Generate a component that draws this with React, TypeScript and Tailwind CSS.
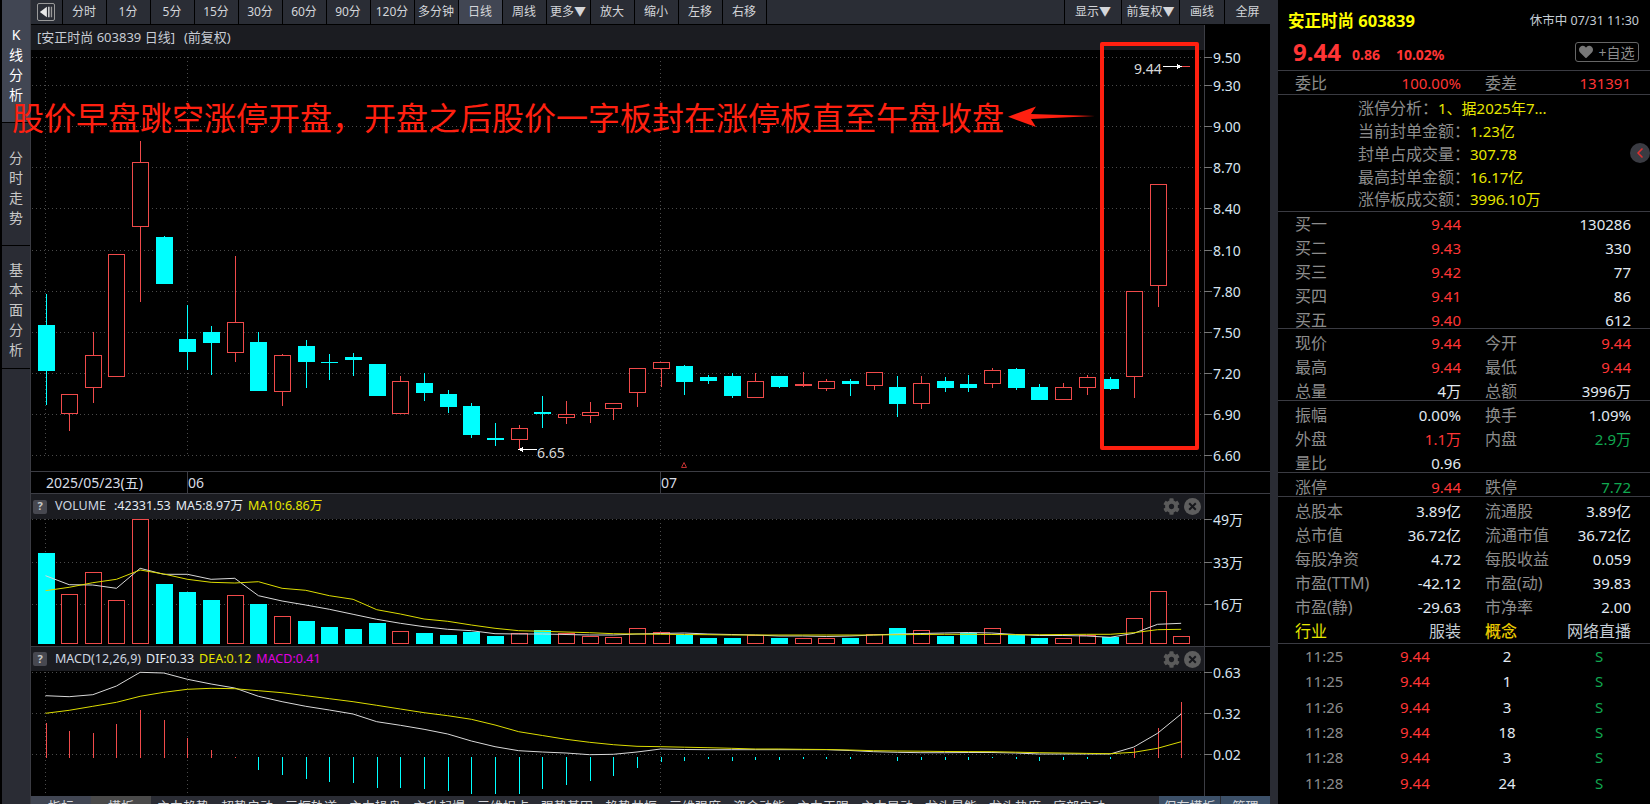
import React from 'react';
import { FaCog, FaHeart } from 'react-icons/fa';
import { ChevronLeft } from 'lucide-react';

const RED = '#f04a4a';
const CYAN = '#00ffff';
const WHITE_LINE = '#d8d8d8';
const YELLOW_LINE = '#dcdc00';

const xAt = (i: number) => Math.round(45.5 + 23.66 * i) + 0.5;

// wickTop, wickBottom, bodyTop, bodyBottom, up
type Candle = [number, number, number, number, boolean];
const candles: Candle[] = [
  [294, 405, 325, 371, false],
  [394, 431, 394, 413, true],
  [332, 403, 355, 387, true],
  [254, 376, 254, 376, true],
  [141, 302, 162, 226, true],
  [236, 284, 237, 284, false],
  [305, 370, 339, 352, false],
  [326, 375, 332, 343, false],
  [256, 362, 322, 352, true],
  [332, 391, 342, 391, false],
  [354, 406, 355, 391, true],
  [340, 388, 346, 362, false],
  [354, 380, 362, 363, false],
  [353, 376, 357, 360, false],
  [364, 396, 364, 396, false],
  [376, 413, 381, 413, true],
  [373, 401, 383, 393, false],
  [390, 413, 394, 407, false],
  [403, 438, 406, 435, false],
  [423, 446, 438, 440, false],
  [425, 450, 428, 439, true],
  [396, 428, 412, 414, false],
  [401, 424, 414, 417, true],
  [402, 423, 412, 415, true],
  [403, 420, 403, 408, true],
  [368, 407, 368, 392, true],
  [362, 387, 362, 368, true],
  [365, 395, 366, 382, false],
  [375, 384, 377, 381, false],
  [373, 398, 376, 396, false],
  [373, 398, 381, 397, true],
  [376, 388, 376, 387, false],
  [372, 387, 384, 385, true],
  [379, 391, 381, 388, true],
  [379, 396, 381, 384, false],
  [372, 390, 372, 385, true],
  [376, 417, 387, 404, false],
  [376, 409, 383, 403, true],
  [377, 392, 381, 388, false],
  [375, 392, 384, 388, false],
  [368, 388, 370, 383, true],
  [368, 390, 369, 388, false],
  [384, 400, 387, 400, false],
  [383, 399, 387, 399, true],
  [375, 395, 377, 387, true],
  [377, 390, 379, 389, false],
  [291, 398, 291, 376, true],
  [184, 307, 184, 285, true],
];

const volumes: [number, boolean][] = [
  [553, false], [594, true], [572, true], [600, true], [519, true], [584, false], [592, false], [600, false],
  [595, true], [604, false], [616, true], [621, false], [627, false], [629, false], [623, false], [631, true],
  [633, false], [635, false], [632, false], [636, false], [633, true], [630, false], [633, true], [636, true],
  [637, true], [628, true], [632, true], [635, false], [638, false], [638, false], [635, true], [638, false],
  [638, true], [638, true], [638, false], [634, true], [628, false], [630, true], [636, false], [633, false],
  [628, true], [635, false], [638, false], [638, true], [635, true], [637, false], [618, true], [591, true], [636, true],
];

const volMa5 = [
  575.7, 584.7, 585, 588.3, 568.3, 574.3, 574.3, 579.3, 578.3, 595.7, 601, 605, 609.3, 614.3, 619.3, 623.3, 626.7,
  629.3, 630.7, 633.7, 634, 634, 634.5, 635, 635, 634, 633.5, 633, 634, 634.5, 635, 636, 636, 636.5, 636, 635, 634,
  633.5, 633, 632.5, 633, 634.5, 635.5, 635.5, 636, 637.3, 633.3, 624.3, 623.3,
];
const volMa10 = [
  590.7, 587.3, 582.7, 579.3, 570, 574, 579.3, 582.3, 583, 581.7, 588.3, 590.3, 595.7, 599.3, 609.7, 614, 619, 621.3,
  625, 628.3, 630.7, 631.3, 632, 632.7, 633.7, 634, 634.3, 634.5, 634.7, 635, 635, 635, 635, 635, 635, 635, 634.7,
  634.5, 634.3, 634.3, 634.5, 634.7, 634.7, 634.5, 634.3, 634.3, 632.7, 629.7, 629.3,
];
const dif = [
  695.7, 696.7, 694.7, 686, 672.3, 673, 679.3, 684, 688, 696.3, 701.7, 706.3, 710, 714, 721.7, 725.3, 729.3, 734, 741,
  746.7, 750.7, 752, 753, 754.7, 754.3, 752, 749, 749.5, 749.7, 749.7, 749.7, 749.7, 749.7, 749.7, 750.5, 751.7, 752.3,
  752.7, 752.7, 752.5, 752.5, 753, 754, 754, 754, 754, 747, 733.3, 714,
];
const dea = [
  713.3, 710.3, 706.3, 702.3, 696.3, 692.3, 689.3, 688.3, 688.7, 690.7, 692.7, 695.7, 698.7, 701.7, 705.3, 709, 712.7,
  715.7, 719.3, 725, 731.7, 735.5, 739.3, 742.3, 744.7, 746.3, 746.7, 747.2, 747.7, 748.3, 749, 749, 749.3, 749.5, 750,
  750.7, 751, 751.2, 751.5, 751.6, 751.7, 752.2, 752.7, 753, 753.4, 753.7, 752.3, 748.3, 741.7,
];
// end of each macd bar, drawn from the zero line
const macd = [
  723, 731, 733, 724, 710, 720, 738, 750, 757, 770, 775, 779, 782, 783, 788, 788, 789, 791, 794, 794, 794, 789, 785,
  781, 776, 768, 762, 761, 759, 761, 760, 760, 759, 759, 759, 757, 761, 760, 760, 760, 758, 759, 761, 760, 759, 759,
  748, 728, 702,
];

const points = (ys: number[]) => ys.map((y, i) => `${45.5 + 23.66 * i},${y}`).join(' ');

const HLine = ({ y, x2 = 1204 }: { y: number; x2?: number }) => (
  <line x1={32} x2={x2} y1={y} y2={y} stroke="#4a4a4a" strokeDasharray="1 3" />
);
const VLine = ({ x, y1, y2 }: { x: number; y1: number; y2: number }) => (
  <line x1={x} x2={x} y1={y1} y2={y2} stroke="#4a4a4a" strokeDasharray="1 3" />
);

const KChart = () => (
  <svg className="block h-[444px] w-[1173px]" viewBox="31 50 1173 444" shapeRendering="crispEdges">
    {[57.5, 85.5, 126.5, 167.5, 208.5, 250.5, 291.5, 332.5, 373.5, 414.5, 455.5].map((y) => (
      <HLine key={y} y={y} />
    ))}
    {[45.5, 187.5, 660.5].map((x) => (
      <VLine key={x} x={x} y1={57} y2={455} />
    ))}
    {candles.map(([wt, wb, t, b, up], i) => {
      const x = xAt(i);
      const color = up ? RED : CYAN;
      return (
        <g key={i}>
          <line x1={x} x2={x} y1={wt} y2={wb} stroke={color} />
          {up ? (
            <rect x={x - 8} y={t + 0.5} width={16} height={b - t} fill="#000" stroke={color} />
          ) : (
            <rect x={x - 8.5} y={t} width={17} height={Math.max(b - t, 1)} fill={color} />
          )}
        </g>
      );
    })}
    <line x1={1182} x2={1190} y1={66.5} y2={66.5} stroke={RED} />
    <line x1={1163} x2={1182} y1={66.5} y2={66.5} stroke="#fff" />
    <polygon points="1182,66.5 1177,64 1177,69" fill="#fff" />
    <text x={1134} y={74} fill="#d8d8d8" fontSize={14}>9.44</text>
    <line x1={518} x2={537} y1={449.5} y2={449.5} stroke="#fff" />
    <polygon points="518,449.5 523,447 523,452" fill="#fff" />
    <text x={537} y={458} fill="#d8d8d8" fontSize={14}>6.65</text>
    <polygon points="684,462.5 681.5,467.5 686.5,467.5" fill="none" stroke="#c03030" shapeRendering="auto" />
    <line x1={31} x2={1204} y1={471.5} y2={471.5} stroke="#3c3d44" />
    <line x1={31} x2={1204} y1={493.5} y2={493.5} stroke="#3c3d44" />
    <line x1={187.5} x2={187.5} y1={472} y2={493} stroke="#3c3d44" />
    <line x1={660.5} x2={660.5} y1={472} y2={493} stroke="#3c3d44" />
    <g fill="#d8dce4" fontSize={14} shapeRendering="auto">
      <text x={46} y={488}>2025/05/23(五)</text>
      <text x={188} y={488}>06</text>
      <text x={661} y={488}>07</text>
    </g>
  </svg>
);

const VolumeChart = () => (
  <svg className="block h-[128px] w-[1173px]" viewBox="31 519 1173 128" shapeRendering="crispEdges">
    {[519.5, 562.5, 604.5].map((y) => (
      <HLine key={y} y={y} />
    ))}
    {[45.5, 187.5, 660.5].map((x) => (
      <VLine key={x} x={x} y1={519} y2={644} />
    ))}
    {volumes.map(([top, up], i) => {
      const x = xAt(i);
      return up ? (
        <rect key={i} x={x - 8} y={top + 0.5} width={16} height={643 - top} fill="#000" stroke={RED} />
      ) : (
        <rect key={i} x={x - 8.5} y={top} width={17} height={644 - top} fill={CYAN} />
      );
    })}
    <polyline points={points(volMa5)} fill="none" stroke={WHITE_LINE} shapeRendering="auto" />
    <polyline points={points(volMa10)} fill="none" stroke={YELLOW_LINE} shapeRendering="auto" />
    <line x1={31} x2={1204} y1={646.5} y2={646.5} stroke="#3c3d44" />
  </svg>
);

const MacdChart = () => (
  <svg className="block h-[125px] w-[1173px]" viewBox="31 671 1173 125" shapeRendering="crispEdges">
    {[672.5, 713.5, 754.5].map((y) => (
      <HLine key={y} y={y} />
    ))}
    {[45.5, 187.5, 660.5].map((x) => (
      <VLine key={x} x={x} y1={672} y2={795} />
    ))}
    {macd.map((end, i) => {
      const x = xAt(i);
      const up = i < 9 || i > 45;
      return <line key={i} x1={x} x2={x} y1={up ? 758 : 757} y2={end} stroke={up ? RED : CYAN} />;
    })}
    <polyline points={points(dif)} fill="none" stroke={WHITE_LINE} shapeRendering="auto" />
    <polyline points={points(dea)} fill="none" stroke={YELLOW_LINE} shapeRendering="auto" />
  </svg>
);

const axisTicks: [number, string][] = [
  [57.5, '9.50'], [85.5, '9.30'], [126.5, '9.00'], [167.5, '8.70'], [208.5, '8.40'], [250.5, '8.10'],
  [291.5, '7.80'], [332.5, '7.50'], [373.5, '7.20'], [414.5, '6.90'], [455.5, '6.60'],
  [519.5, '49万'], [562.5, '33万'], [604.5, '16万'], [672.5, '0.63'], [713.5, '0.32'], [754.5, '0.02'],
];

const PriceAxis = () => (
  <svg className="block h-[771px] w-[66px]" viewBox="1204 25 66 771">
    <g shapeRendering="crispEdges" stroke="#3c3d44">
      <line x1={1204.5} x2={1204.5} y1={25} y2={796} />
      <line x1={1204} x2={1270} y1={471.5} y2={471.5} />
      <line x1={1204} x2={1270} y1={493.5} y2={493.5} />
      <line x1={1204} x2={1270} y1={646.5} y2={646.5} />
      {axisTicks.map(([y]) => (
        <line key={y} x1={1204} x2={1212} y1={y} y2={y} stroke="#777" />
      ))}
    </g>
    <g fill="#d8e4f0" fontSize={14}>
      {axisTicks.map(([y, label]) => (
        <text key={label} x={1213} y={y + 5}>{label}</text>
      ))}
    </g>
  </svg>
);

const periods = ['分时', '1分', '5分', '15分', '30分', '60分', '90分', '120分', '多分钟', '日线', '周线', '更多▼', '放大', '缩小', '左移', '右移'];

const Toolbar = () => (
  <div className="flex h-[25px] shrink-0 border-b border-black bg-[#2a2d35] text-[12px] text-[#d4d6da]">
    <div className="flex w-[31.5px] items-center justify-center border-r border-black">
      <div className="flex h-[18px] w-[18px] items-center justify-center rounded-[2px] border border-[#9a9a9a]">
        <svg viewBox="0 0 16 16" className="h-[14px] w-[14px]">
          <polygon points="1,8 9,2 9,14" fill="#e8e8e8" />
          <rect x="10.5" y="2" width="1.5" height="12" fill="#e8e8e8" />
          <rect x="13.5" y="2" width="1.5" height="12" fill="#9a9a9a" />
        </svg>
      </div>
    </div>
    {periods.map((p) => (
      <div
        key={p}
        className={`flex w-[44px] items-center justify-center border-r border-black ${p === '日线' ? 'bg-[#414653]' : ''}`}
      >
        {p}
      </div>
    ))}
    <div className="flex-1" />
    <div className="flex w-[58px] items-center justify-center border-x border-black">显示▼</div>
    <div className="flex w-[58px] items-center justify-center border-r border-black">前复权▼</div>
    <div className="flex w-[45px] items-center justify-center border-r border-black">画线</div>
    <div className="flex w-[45px] items-center justify-center">全屏</div>
  </div>
);

const PaneHeader = ({ children, tools, h }: { children: React.ReactNode; tools?: boolean; h: string }) => (
  <div className={`flex items-center bg-[#1b1c21] pr-[3px] text-[12.5px] ${h}`}>
    <div className="ml-[2px] mr-[8px] flex h-[14px] w-[14px] items-center justify-center rounded-[2px] bg-[#474850] text-[11px] font-bold text-[#c8c8c8]">?</div>
    {children}
    {tools && (
      <div className="ml-auto flex items-center gap-[4px]">
        <FaCog className="h-[17px] w-[17px] text-[#5a5a5a]" />
        <svg viewBox="0 0 17 17" className="h-[17px] w-[17px]">
          <circle cx="8.5" cy="8.5" r="8.5" fill="#5e5e5e" />
          <path d="M5.2 5.2 L11.8 11.8 M11.8 5.2 L5.2 11.8" stroke="#17181c" strokeWidth="2" />
        </svg>
      </div>
    )}
  </div>
);

const tabs = ['主力趋势', '超势启动', '三框轨道', '主力操盘', '主升起爆', '三维拐点', '强势基因', '趋势共振', '三维强度', '资金动能', '主力天眼', '主力异动', '龙头暴能', '龙头热度', '底部启动'];

const BottomTabs = () => (
  <div className="flex h-[30px] shrink-0 bg-[#2a2c34] text-[13px] text-[#d4d6da]">
    <div className="flex h-[22px] w-[60px] items-center justify-center bg-[#414653]">指标</div>
    <div className="flex h-[22px] w-[60px] items-center justify-center bg-[#4a4a4a]">模板</div>
    {tabs.map((t) => (
      <div key={t} className="flex h-[22px] w-[64px] shrink-0 items-center justify-center">{t}</div>
    ))}
    <div className="ml-auto flex h-[22px] w-[61px] items-center justify-center bg-[#3c5068]">保存模板</div>
    <div className="ml-[1px] flex h-[22px] w-[49px] items-center justify-center bg-[#3c5068]">管理</div>
  </div>
);

const RailTab = ({ chars, active, pad }: { chars: string[]; active?: boolean; pad: string }) => (
  <div className={`flex h-[123px] shrink-0 flex-col items-center border-b border-black text-[14px] leading-[20px] ${pad} ${active ? 'bg-[#414653] text-white' : 'bg-[#2a2c34] text-[#c8c8c8]'}`}>
    {chars.map((c) => (
      <span key={c}>{c}</span>
    ))}
  </div>
);

const LABEL = 'text-[#8c8c8c]';
const RED_TXT = 'text-[#ff3535]';
const WHITE_TXT = 'text-[#e2eaf2]';
const GREEN_TXT = 'text-[#10a850]';

const Kv = ({ label, value, color = WHITE_TXT, w }: { label?: string; value?: string; color?: string; w: string }) => (
  <div className={`flex justify-between ${w}`}>
    <span className={`text-[16px] ${LABEL}`}>{label}</span>
    <span className={`text-[15px] ${color}`}>{value}</span>
  </div>
);

type Cell = [string?, string?, string?];
const Row = ({ left, right }: { left: Cell; right?: Cell }) => (
  <div className="flex h-[24px] items-center gap-[24px] pl-[17px] leading-[24px]">
    <Kv label={left[0]} value={left[1]} color={left[2]} w="w-[166px]" />
    {right && <Kv label={right[0]} value={right[1]} color={right[2]} w="w-[146px]" />}
  </div>
);

const Limit = ({ label, value }: { label: string; value: string }) => (
  <div className="flex h-[22.75px] items-center pl-[80px] leading-[22px]">
    <span className={`text-[16px] ${LABEL}`}>{label}：</span>
    <span className="text-[15px] text-[#e6e600]">{value}</span>
  </div>
);

const trades: [string, string][] = [['11:25', '2'], ['11:25', '1'], ['11:26', '3'], ['11:28', '18'], ['11:28', '3'], ['11:28', '24'], ['11:29', '9']];

const QuotePanel = () => (
  <div className="relative w-[372px] shrink-0 bg-black">
    <div className="h-[71px] border-b border-[#3a3b42]">
      <div className="flex items-center justify-between pl-[10px] pr-[11px] pt-[10px] leading-[22px]">
        <span className="text-[16.5px] font-bold text-[#ffff00]">安正时尚 603839</span>
        <span className="text-[12.5px] text-[#c4ccd4]">休市中 07/31 11:30</span>
      </div>
      <div className="flex items-center pl-[15px] pr-[11px] pt-[6px]">
        <span className="text-[24px] font-bold leading-[28px] text-[#ff3535]">9.44</span>
        <span className="ml-[11px] mt-[4px] text-[14px] font-bold text-[#ff3535]">0.86</span>
        <span className="ml-[16px] mt-[4px] text-[14px] font-bold text-[#ff3535]">10.02%</span>
        <span className="ml-auto flex h-[20px] w-[64px] items-center justify-center gap-[5px] rounded-[3px] border border-[#666] text-[14px] text-[#8c8c8c]">
          <FaHeart className="h-[14px] w-[14px] text-[#777]" />
          +自选
        </span>
      </div>
    </div>
    <div className="h-[24px] border-b border-[#3a3b42]">
      <Row left={['委比', '100.00%', RED_TXT]} right={['委差', '131391', RED_TXT]} />
    </div>
    <div className="h-[117px] border-b border-[#3a3b42] pt-[2px]">
      <Limit label="涨停分析" value="1、据2025年7..." />
      <Limit label="当前封单金额" value="1.23亿" />
      <Limit label="封单占成交量" value="307.78" />
      <Limit label="最高封单金额" value="16.17亿" />
      <Limit label="涨停板成交额" value="3996.10万" />
    </div>
    <div className="h-[117px] border-b border-[#3a3b42]">
      <Row left={['买一', '9.44', RED_TXT]} right={['', '130286']} />
      <Row left={['买二', '9.43', RED_TXT]} right={['', '330']} />
      <Row left={['买三', '9.42', RED_TXT]} right={['', '77']} />
      <Row left={['买四', '9.41', RED_TXT]} right={['', '86']} />
      <Row left={['买五', '9.40', RED_TXT]} right={['', '612']} />
    </div>
    <div className="h-[72px] border-b border-[#3a3b42] pt-[2px]">
      <Row left={['现价', '9.44', RED_TXT]} right={['今开', '9.44', RED_TXT]} />
      <Row left={['最高', '9.44', RED_TXT]} right={['最低', '9.44', RED_TXT]} />
      <Row left={['总量', '4万']} right={['总额', '3996万']} />
    </div>
    <div className="h-[72px] border-b border-[#3a3b42] pt-[2px]">
      <Row left={['振幅', '0.00%']} right={['换手', '1.09%']} />
      <Row left={['外盘', '1.1万', RED_TXT]} right={['内盘', '2.9万', GREEN_TXT]} />
      <Row left={['量比', '0.96']} />
    </div>
    <div className="h-[24px] border-b border-[#3a3b42] pt-[2px]">
      <Row left={['涨停', '9.44', RED_TXT]} right={['跌停', '7.72', GREEN_TXT]} />
    </div>
    <div className="h-[147px] border-b border-[#3a3b42] pt-[2px]">
      <Row left={['总股本', '3.89亿']} right={['流通股', '3.89亿']} />
      <Row left={['总市值', '36.72亿']} right={['流通市值', '36.72亿']} />
      <Row left={['每股净资', '4.72']} right={['每股收益', '0.059']} />
      <Row left={['市盈(TTM)', '-42.12']} right={['市盈(动)', '39.83']} />
      <Row left={['市盈(静)', '-29.63']} right={['市净率', '2.00']} />
      <div className="flex h-[24px] items-center gap-[24px] pl-[17px] text-[16px]">
        <div className="flex w-[166px] justify-between">
          <span className="text-[#e6e600]">行业</span>
          <span className="text-[#c4ccd4]">服装</span>
        </div>
        <div className="flex w-[146px] justify-between">
          <span className="font-medium text-[#e8c800]">概念</span>
          <span className="text-[#c4ccd4]">网络直播</span>
        </div>
      </div>
    </div>
    {trades.map(([t, v], i) => (
      <div key={i} className="flex h-[25.3px] items-center text-[15px] leading-[25px]">
        <span className={`w-[122px] pl-[27px] ${LABEL}`}>{t}</span>
        <span className={`w-[60px] ${RED_TXT}`}>9.44</span>
        <span className={`w-[94px] text-center ${WHITE_TXT}`}>{v}</span>
        <span className={`w-[90px] text-center ${GREEN_TXT}`}>S</span>
      </div>
    ))}
    <div className="absolute left-[352px] top-[143px] flex h-[20px] w-[20px] items-center justify-center rounded-full bg-[#3a3b42]">
      <ChevronLeft className="h-[16px] w-[16px] text-[#e03030]" strokeWidth={2.5} />
    </div>
  </div>
);

export default function App() {
  return (
    <div className="relative flex h-[804px] w-[1650px] overflow-hidden bg-black font-['Noto_Sans','Noto_Sans_CJK_SC',sans-serif]">
      <div className="flex w-[31px] shrink-0 flex-col border-r border-[#3a3b42] pl-[2px]">
        <RailTab chars={['K', '线', '分', '析']} active pad="pt-[25px]" />
        <RailTab chars={['分', '时', '走', '势']} pad="pt-[25px]" />
        <RailTab chars={['基', '本', '面', '分', '析']} pad="pt-[14px]" />
        <div className="flex-1 bg-[#2a2c34]" />
      </div>

      <div className="flex w-[1239px] shrink-0 flex-col">
        <Toolbar />
        <div className="flex shrink-0">
          <div className="w-[1173px]">
            <div className="flex h-[25px] items-center bg-[#1b1c21] pl-[6px] text-[13px] text-[#c8ccd4]">
              <span>[安正时尚 603839 日线]</span>
              <span className="ml-[9px]">(前复权)</span>
            </div>
            <KChart />
            <PaneHeader h="h-[25px]" tools>
              <span className="text-[#cdd6e0]">VOLUME</span>
              <span className="ml-[8px] text-[#e2eaf2]">:42331.53</span>
              <span className="ml-[5px] text-[#e2eaf2]">MA5:8.97万</span>
              <span className="ml-[5px] text-[#e6e600]">MA10:6.86万</span>
            </PaneHeader>
            <VolumeChart />
            <PaneHeader h="h-[24px]" tools>
              <span className="text-[#cdd6e0]">MACD(12,26,9)</span>
              <span className="ml-[5px] text-[#e2eaf2]">DIF:0.33</span>
              <span className="ml-[5px] text-[#e6e600]">DEA:0.12</span>
              <span className="ml-[5px] text-[#e000e0]">MACD:0.41</span>
            </PaneHeader>
            <MacdChart />
          </div>
          <PriceAxis />
        </div>
        <BottomTabs />
      </div>

      <div className="w-[8px] shrink-0 bg-[#2a2c34]" />
      <QuotePanel />

      {/* hand-drawn annotation on top of the chart */}
      <div className="absolute left-[12px] top-[96px] whitespace-nowrap text-[32px] leading-[44px] text-[#ff2010]">
        股价早盘跳空涨停开盘，开盘之后股价一字板封在涨停板直至午盘收盘
      </div>
      <svg className="absolute left-[1005px] top-[100px] h-[34px] w-[95px]" viewBox="1005 100 95 34">
        <polygon points="1008,116.7 1036,106.5 1031,114 1095,116 1031,119 1036,127" fill="#ff2010" />
      </svg>
      <div className="absolute left-[1100px] top-[42px] h-[408px] w-[99px] rounded-[2px] border-4 border-[#ff2010]" />
    </div>
  );
}
